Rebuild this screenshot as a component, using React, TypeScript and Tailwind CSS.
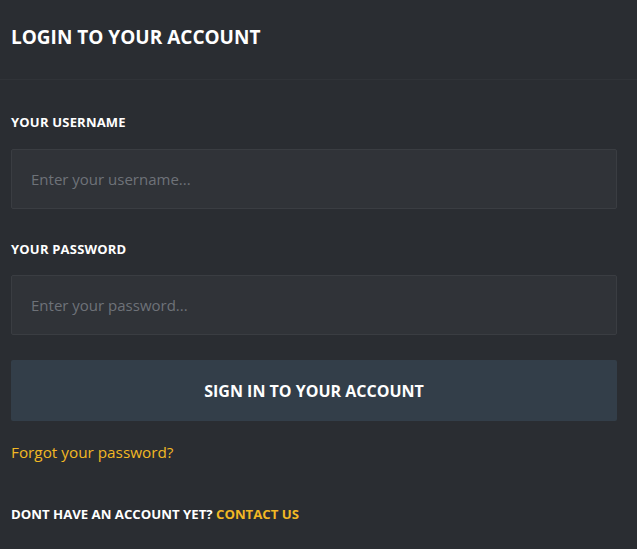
export default function App() {
  const font = { fontFamily: '"Open Sans", "Liberation Sans", sans-serif' };
  return (
    <div className="min-h-[549px] w-full bg-[#2a2d32] text-white" style={font}>
      <div className="flex h-[80px] items-center border-b border-[#303338] px-[11px] pb-[6px]">
        <h1 className="text-[19px] font-bold leading-[24px] tracking-[0px]">LOGIN TO YOUR ACCOUNT</h1>
      </div>
      <form className="flex flex-col px-[11px] pt-[34px]" onSubmit={(e) => e.preventDefault()}>
        <label className="text-[13px] font-bold leading-[16px] tracking-[0.2px]">YOUR USERNAME</label>
        <input
          className="mt-[19px] h-[60px] w-[606px] rounded-[2px] border border-[#3a3d42] bg-[#303338] px-[19px] text-[15px] text-white outline-none placeholder:text-[#6e7278]"
          placeholder="Enter your username..."
        />
        <label className="mt-[32px] text-[13px] font-bold leading-[16px] tracking-[0.2px]">YOUR PASSWORD</label>
        <input
          type="password"
          className="mt-[18px] h-[60px] w-[606px] rounded-[2px] border border-[#3a3d42] bg-[#303338] px-[19px] text-[15px] text-white outline-none placeholder:text-[#6e7278]"
          placeholder="Enter your password..."
        />
        <button
          type="submit"
          className="mt-[25px] h-[61px] w-[606px] rounded-[2px] bg-[#333e49] text-[16px] font-bold"
        >
          SIGN IN TO YOUR ACCOUNT
        </button>
        <a className="mt-[20px] text-[15.3px] leading-[22px] text-[#f2b824]">Forgot your password?</a>
        <p className="mt-[43px] text-[13.2px] font-bold leading-[16px]">
          DONT HAVE AN ACCOUNT YET? <span className="text-[#f2b824]">CONTACT US</span>
        </p>
      </form>
    </div>
  );
}
